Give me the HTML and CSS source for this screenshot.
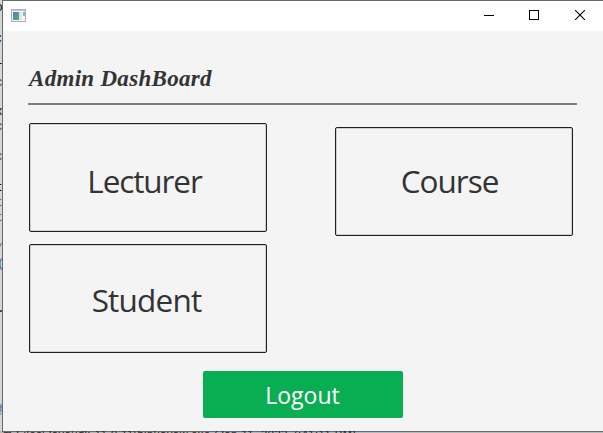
FILE: index.html
```html
<!DOCTYPE html>
<html lang="en">
<head>
<meta charset="utf-8">
<title>Admin DashBoard</title>
<link rel="stylesheet" href="styles.css">
</head>
<body>
<div class="desktop">
  <div class="editor" aria-hidden="true">
    <span class="frag f1">o</span><span class="frag f2">;</span><span class="frag f3">r</span><span class="frag f4">c</span><span class="frag f5">x</span><span class="frag f6">c</span><span class="frag f7">c</span><span class="frag f8">t</span><span class="frag f9">t</span><span class="frag f10">t</span><span class="frag f11">/</span><span class="frag f12">(</span><span class="frag f13">.</span><span class="frag f14">@</span>
  </div>
  <div class="window">
    <header class="titlebar">
      <svg class="app-icon" width="15" height="13" viewBox="0 0 15 13">
        <defs><linearGradient id="g" x1="0" y1="0" x2="1" y2="1"><stop offset="0" stop-color="#4b83b5"/><stop offset="1" stop-color="#55ac82"/></linearGradient></defs>
        <rect x=".5" y=".5" width="14" height="12" fill="#f6f6f7" stroke="#aab0b7"/>
        <rect x="1" y="1" width="13" height="1" fill="#c3c8ce"/>
        <rect x="2" y="3" width="6" height="8" fill="url(#g)"/>
        <rect x="8" y="3" width="3" height="8" fill="#e3e3e6"/>
        <rect x="12" y="3" width="2" height="4" fill="#88b9aa"/>
      </svg>
      <div class="controls">
        <svg class="control" width="10" height="10" viewBox="0 0 10 10"><path d="M0 5.5H10" stroke="#000"/></svg>
        <svg class="control" width="10" height="10" viewBox="0 0 10 10"><rect x=".5" y=".5" width="9" height="9" fill="none" stroke="#000"/></svg>
        <svg class="control" width="10" height="10" viewBox="0 0 10 10"><path d="M0 0L10 10M10 0L0 10" stroke="#000" stroke-width="1.1"/></svg>
      </div>
    </header>
    <main class="content">
      <h1 class="title"><span>Admin DashBoard</span></h1>
      <div class="cards">
        <button class="card lecturer">Lecturer</button>
        <button class="card course">Course</button>
        <button class="card student">Student</button>
      </div>
      <button class="logout">Logout</button>
    </main>
  </div>
  <div class="console" aria-hidden="true">m Files\Java\jdk-11.0.11\bin\javaw.exe (Jan 11, 2022 7:41:11 PM)</div>
</div>
</body>
</html>
```
FILE: styles.css
```css
* { box-sizing: border-box; }
body { margin: 0; overflow: hidden; font-family: "Open Sans", "Noto Sans", sans-serif; }
button { font-family: inherit; padding: 0; }

.desktop {
  position: relative;
  width: 603px;
  height: 433px;
  padding-left: 2px;
  overflow: hidden;
  background: #b9b9b9;
}

/* Code editor showing at the left edge, behind the window */
.editor {
  position: absolute;
  left: 0;
  top: 0;
  width: 2px;
  height: 431px;
  overflow: hidden;
  background: #d6d6d6;
  font: 13px/14px "Liberation Mono", monospace;
}
.frag { position: absolute; left: -5px; color: #111; }
.f1 { top: 1px; }
.f2 { top: 32px; left: -4px; }
.f3 { top: 60px; }
.f4 { top: 76px; color: #6b4550; }
.f5 { top: 105px; }
.f6 { top: 120px; color: #6b4550; }
.f7 { top: 150px; color: #6b4550; }
.f8 { top: 181px; }
.f9 { top: 196px; color: #8c5142; }
.f10 { top: 211px; color: #8c5142; }
.f11 { top: 242px; color: #3b8292; }
.f12 { top: 257px; left: -3px; color: #4d6f78; }
.f13 { top: 302px; left: -3px; }
.f14 { top: 403px; color: #3d69a5; }

.window {
  position: relative;
  width: 601px;
  height: 432px;
  border: 1px solid #6b6b6b;
  border-right: 0;
  background: #f4f4f4;
}
.titlebar {
  display: flex;
  align-items: center;
  justify-content: space-between;
  height: 30px;
  padding: 0 18px 2px 8px;
  background: #fff;
}
.controls { display: flex; gap: 35px; }
.control:last-child { margin-left: 1px; }
.app-icon, .control { display: block; }

.content { padding: 31px 26px 0 25px; }
.title {
  width: 549px;
  height: 43px;
  margin: 0 0 18px;
  padding-left: 1px;
  border-bottom: 2px solid #7b7e7b;
  color: #333;
  font: italic bold 23px/34px "Palatino Linotype", "Liberation Serif", serif;
  letter-spacing: 0.3px;
}
.cards {
  display: grid;
  grid-template-columns: 238px 238px;
  grid-template-rows: 109px 109px;
  gap: 12px 68px;
  margin-left: 1px;
}
.card {
  height: 109px;
  border: 1px solid #202020;
  border-radius: 2px;
  background: #f4f4f4;
  box-shadow: inset 0 0 0 1px #d0d0d0;
  color: #333;
  font-size: 31.5px;
  line-height: 44px;
}
.lecturer { padding: 7px 7px 0 0; letter-spacing: -1.1px; }
.course { margin-top: 4px; padding: 0 9px 1px 0; letter-spacing: -1px; }
.student { padding: 3px 3px 0 0; letter-spacing: -0.8px; }
.logout {
  display: block;
  width: 200px;
  height: 47px;
  margin: 18px 0 0 175px;
  padding-right: 1px;
  border: 0;
  border-radius: 2px;
  background: #09ae53;
  color: #fff;
  font-size: 23px;
}

/* Console line cut off by the bottom edge */
.console {
  position: absolute;
  left: 3px;
  top: 431px;
  height: 2px;
  overflow: hidden;
  color: #222;
  white-space: nowrap;
  font: 11px/7px "Liberation Sans", sans-serif;
  letter-spacing: 0.55px;
}
```
